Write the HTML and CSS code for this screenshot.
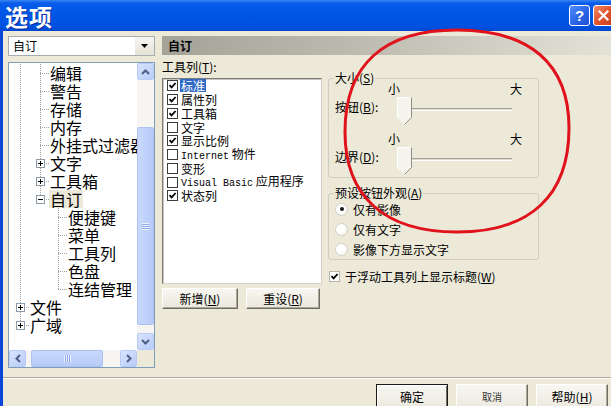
FILE: index.html
```html
<!DOCTYPE html>
<html lang="zh-CN">
<head>
<meta charset="utf-8">
<title>选项</title>
<link rel="stylesheet" href="styles.css">
</head>
<body>
<div class="window">
  <div class="titlebar">
    <span class="title">选项</span>
    <div class="tb-btns">
      <span class="tb-btn help">?</span>
      <span class="tb-btn close"><svg width="13" height="13" viewBox="0 0 13 13"><path d="M2.5 2.5l8 8M10.5 2.5l-8 8" stroke="#fff" stroke-width="2.2" stroke-linecap="square"/></svg></span>
    </div>
  </div>
  <div class="client">
    <div class="main">
      <div class="left">
        <div class="combo">
          <span class="combo-text">自订</span>
          <span class="combo-btn"><svg width="7" height="4" viewBox="0 0 7 4"><path d="M0 0h7L3.5 4z" fill="#000"/></svg></span>
        </div>
        <div class="tree">
          <div class="rows">
            <div class="trow"><span class="c v"></span><span class="c t"></span><span class="lbl">编辑</span></div>
            <div class="trow"><span class="c v"></span><span class="c t"></span><span class="lbl">警告</span></div>
            <div class="trow"><span class="c v"></span><span class="c t"></span><span class="lbl">存储</span></div>
            <div class="trow"><span class="c v"></span><span class="c t"></span><span class="lbl">内存</span></div>
            <div class="trow"><span class="c v"></span><span class="c t"></span><span class="lbl">外挂式过滤器</span></div>
            <div class="trow"><span class="c v"></span><span class="c t"><span class="exp"><svg width="9" height="9" viewBox="0 0 9 9"><rect x=".5" y=".5" width="8" height="8" fill="#fff" stroke="#8D9AA8"/><path d="M2 4.5h5M4.5 2v5" stroke="#000"/></svg></span></span><span class="lbl">文字</span></div>
            <div class="trow"><span class="c v"></span><span class="c t"><span class="exp"><svg width="9" height="9" viewBox="0 0 9 9"><rect x=".5" y=".5" width="8" height="8" fill="#fff" stroke="#8D9AA8"/><path d="M2 4.5h5M4.5 2v5" stroke="#000"/></svg></span></span><span class="lbl">工具箱</span></div>
            <div class="trow"><span class="c v"></span><span class="c l"><span class="exp"><svg width="9" height="9" viewBox="0 0 9 9"><rect x=".5" y=".5" width="8" height="8" fill="#fff" stroke="#8D9AA8"/><path d="M2 4.5h5" stroke="#000"/></svg></span></span><span class="lbl sel">自订</span></div>
            <div class="trow"><span class="c v"></span><span class="c"></span><span class="c n t3"></span><span class="lbl">便捷键</span></div>
            <div class="trow"><span class="c v"></span><span class="c"></span><span class="c n t3"></span><span class="lbl">菜单</span></div>
            <div class="trow"><span class="c v"></span><span class="c"></span><span class="c n t3"></span><span class="lbl">工具列</span></div>
            <div class="trow"><span class="c v"></span><span class="c"></span><span class="c n t3"></span><span class="lbl">色盘</span></div>
            <div class="trow"><span class="c v"></span><span class="c"></span><span class="c n l3"></span><span class="lbl">连结管理</span></div>
            <div class="trow"><span class="c t"><span class="exp"><svg width="9" height="9" viewBox="0 0 9 9"><rect x=".5" y=".5" width="8" height="8" fill="#fff" stroke="#8D9AA8"/><path d="M2 4.5h5M4.5 2v5" stroke="#000"/></svg></span></span><span class="lbl">文件</span></div>
            <div class="trow"><span class="c l"><span class="exp"><svg width="9" height="9" viewBox="0 0 9 9"><rect x=".5" y=".5" width="8" height="8" fill="#fff" stroke="#8D9AA8"/><path d="M2 4.5h5M4.5 2v5" stroke="#000"/></svg></span></span><span class="lbl">广域</span></div>
          </div>
          <div class="vscroll">
            <span class="sb-btn"><svg width="9" height="6" viewBox="0 0 9 6"><path d="M1 5L4.5 1.5L8 5" fill="none" stroke="#4D6185" stroke-width="2"/></svg></span>
            <div class="vtrack"><span class="vthumb"><span class="grip-v"></span></span></div>
            <span class="sb-btn"><svg width="9" height="6" viewBox="0 0 9 6"><path d="M1 1L4.5 4.5L8 1" fill="none" stroke="#4D6185" stroke-width="2"/></svg></span>
          </div>
          <div class="hscroll">
            <span class="sb-btn"><svg width="6" height="9" viewBox="0 0 6 9"><path d="M5 1L1.5 4.5L5 8" fill="none" stroke="#4D6185" stroke-width="2"/></svg></span>
            <div class="htrack"><span class="hthumb"><span class="grip-h"></span></span></div>
            <span class="sb-btn"><svg width="6" height="9" viewBox="0 0 6 9"><path d="M1 1L4.5 4.5L1 8" fill="none" stroke="#4D6185" stroke-width="2"/></svg></span>
          </div>
          <div class="corner"></div>
        </div>
      </div>
      <div class="right">
        <div class="header">自订</div>
        <div class="panel">
          <div class="col-a">
            <div class="lab">工具列(<u>T</u>):</div>
            <div class="listbox">
              <div class="li"><span class="cb"><svg width="9" height="9" viewBox="0 0 9 9"><path d="M1.5 4.2L3.6 6.4L7.6 2" fill="none" stroke="#000" stroke-width="1.7"/></svg></span><span class="lt hl">标准</span></div>
              <div class="li"><span class="cb"><svg width="9" height="9" viewBox="0 0 9 9"><path d="M1.5 4.2L3.6 6.4L7.6 2" fill="none" stroke="#000" stroke-width="1.7"/></svg></span><span class="lt">属性列</span></div>
              <div class="li"><span class="cb"><svg width="9" height="9" viewBox="0 0 9 9"><path d="M1.5 4.2L3.6 6.4L7.6 2" fill="none" stroke="#000" stroke-width="1.7"/></svg></span><span class="lt">工具箱</span></div>
              <div class="li"><span class="cb"></span><span class="lt">文字</span></div>
              <div class="li"><span class="cb"><svg width="9" height="9" viewBox="0 0 9 9"><path d="M1.5 4.2L3.6 6.4L7.6 2" fill="none" stroke="#000" stroke-width="1.7"/></svg></span><span class="lt">显示比例</span></div>
              <div class="li"><span class="cb"></span><span class="lt"><span class="mono">Internet</span> 物件</span></div>
              <div class="li"><span class="cb"></span><span class="lt">变形</span></div>
              <div class="li"><span class="cb"></span><span class="lt"><span class="mono">Visual Basic</span> 应用程序</span></div>
              <div class="li"><span class="cb"><svg width="9" height="9" viewBox="0 0 9 9"><path d="M1.5 4.2L3.6 6.4L7.6 2" fill="none" stroke="#000" stroke-width="1.7"/></svg></span><span class="lt">状态列</span></div>
            </div>
            <div class="btnrow">
              <span class="btn b-new">新增(<u>N</u>)</span>
              <span class="btn b-reset">重设(<u>R</u>)</span>
            </div>
          </div>
          <div class="col-b">
            <div class="group g-size">
              <div class="legend">大小(<u>S</u>)</div>
              <div class="srow first">
                <span class="slabel">按钮(<u>B</u>):</span>
                <div class="slider">
                  <div class="scale"><span>小</span><span>大</span></div>
                  <div class="strack">
                    <div class="groove"></div>
                    <svg class="sthumb" width="15" height="28" viewBox="0 0 15 28"><path d="M0.5 0.5H14.5V20.5L7.5 27.5L0.5 21.5Z" fill="#F5F4EF"/><path d="M0.5 21.5V0.5H14" fill="none" stroke="#fff"/><path d="M14.5 0.5V20.5L7.5 27.5" fill="none" stroke="#8E8D86"/></svg>
                  </div>
                </div>
              </div>
              <div class="srow">
                <span class="slabel">边界(<u>D</u>):</span>
                <div class="slider">
                  <div class="scale"><span>小</span><span>大</span></div>
                  <div class="strack">
                    <div class="groove"></div>
                    <svg class="sthumb" width="15" height="28" viewBox="0 0 15 28"><path d="M0.5 0.5H14.5V20.5L7.5 27.5L0.5 21.5Z" fill="#F5F4EF"/><path d="M0.5 21.5V0.5H14" fill="none" stroke="#fff"/><path d="M14.5 0.5V20.5L7.5 27.5" fill="none" stroke="#8E8D86"/></svg>
                  </div>
                </div>
              </div>
            </div>
            <div class="group g-look">
              <div class="legend">预设按钮外观(<u>A</u>)</div>
              <div class="rrow first"><span class="radio on"></span><span>仅有影像</span></div>
              <div class="rrow"><span class="radio"></span><span>仅有文字</span></div>
              <div class="rrow"><span class="radio"></span><span>影像下方显示文字</span></div>
            </div>
            <div class="crow"><span class="cb plain"><svg width="9" height="9" viewBox="0 0 9 9"><path d="M1.5 4.2L3.6 6.4L7.6 2" fill="none" stroke="#000" stroke-width="1.8"/></svg></span><span>于浮动工具列上显示标题(<u>W</u>)</span></div>
          </div>
        </div>
      </div>
    </div>
    <div class="sep"></div>
    <div class="footer">
      <span class="fbtn def">确定</span>
      <span class="fbtn cancel">取消</span>
      <span class="fbtn">帮助(<u>H</u>)</span>
    </div>
  </div>
  <svg class="mark" width="611" height="406" viewBox="0 0 611 406"><path d="M457 30C530 30 569 64 569 128C569 196 530 232 457 232C384 232 345 196 345 132C345 64 384 30 457 30Z" fill="none" stroke="#E0121C" stroke-width="3"/></svg>
</div>
</body>
</html>
```

FILE: styles.css
```css
* { box-sizing: border-box; }
body {
  margin: 0;
  width: 611px;
  height: 406px;
  overflow: hidden;
  background: #ECE9D8;
  font-family: "Noto Sans CJK SC", "Liberation Sans", sans-serif;
  font-size: 12px;
  color: #000;
}
u { text-decoration: underline; text-underline-offset: 1px; }

.window {
  position: relative;
  width: 611px;
  height: 406px;
  display: flex;
  flex-direction: column;
}

/* title bar */
.titlebar {
  flex: none;
  height: 31px;
  display: flex;
  align-items: center;
  padding-left: 5px;
  overflow: hidden;
  background: linear-gradient(to bottom, #3A86F4 0, #0A5CEB 3px, #0056E6 40%, #0052E0 85%, #0047D2 100%);
}
.title {
  color: #fff;
  font-size: 23px;
  font-weight: bold;
  line-height: 28px;
  letter-spacing: 1px;
  text-shadow: 1px 1px 0 #0B2E9E;
}
.tb-btns {
  margin-left: auto;
  margin-right: -3px;
  display: flex;
  gap: 3px;
  align-self: flex-start;
  margin-top: 5px;
}
.tb-btn {
  width: 21px;
  height: 21px;
  border: 1px solid #fff;
  border-radius: 3px;
  display: flex;
  align-items: center;
  justify-content: center;
}
.help {
  background: linear-gradient(135deg, #4F8BF8 0%, #2A62E6 60%, #1E4FD0 100%);
  color: #fff;
  font-family: "Liberation Sans", sans-serif;
  font-weight: bold;
  font-size: 15px;
  line-height: 1;
}
.close {
  background: linear-gradient(135deg, #F08A6A 0%, #E2532E 50%, #C8401F 100%);
}

/* client */
.client {
  flex: 1;
  min-height: 0;
  border-left: 3px solid #0A46DA;
  display: flex;
  flex-direction: column;
}
.main {
  display: flex;
  gap: 7px;
  padding: 5px 0 0 5px;
}
.left {
  flex: none;
  width: 147px;
  height: 332px;
  display: flex;
  flex-direction: column;
  gap: 6px;
}
.combo {
  flex: none;
  height: 20px;
  border: 1px solid #A5ACB2;
  background: #fff;
  display: flex;
  align-items: stretch;
}
.combo-text {
  flex: 1;
  padding-left: 4px;
  line-height: 18px;
}
.combo-btn {
  width: 19px;
  background: linear-gradient(to bottom, #F6F5F0, #E4E2D6);
  display: flex;
  align-items: center;
  justify-content: center;
}

/* tree */
.tree {
  flex: 1;
  border: 1px solid #7F9DB9;
  background: #fff;
  display: grid;
  grid-template-columns: 1fr 17px;
  grid-template-rows: 1fr 17px;
  overflow: hidden;
}
.rows {
  padding-top: 1px;
  overflow: hidden;
}
.trow {
  display: flex;
  height: 18px;
  white-space: nowrap;
  font-size: 16px;
  line-height: 18px;
}
.c {
  flex: none;
  width: 20px;
  display: flex;
  align-items: center;
}
.c.n { width: 18px; }
.v {
  background: repeating-linear-gradient(to bottom, #A0A0A0 0 1px, transparent 1px 2px) 11px 0 / 1px 100% no-repeat;
}
.t {
  background:
    repeating-linear-gradient(to bottom, #A0A0A0 0 1px, transparent 1px 2px) 11px 0 / 1px 100% no-repeat,
    repeating-linear-gradient(to right, #A0A0A0 0 1px, transparent 1px 2px) 11px 9px / 9px 1px no-repeat;
}
.l {
  background:
    repeating-linear-gradient(to bottom, #A0A0A0 0 1px, transparent 1px 2px) 11px 0 / 1px 10px no-repeat,
    repeating-linear-gradient(to right, #A0A0A0 0 1px, transparent 1px 2px) 11px 9px / 9px 1px no-repeat;
}
.t3 {
  background:
    repeating-linear-gradient(to bottom, #A0A0A0 0 1px, transparent 1px 2px) 9px 0 / 1px 100% no-repeat,
    repeating-linear-gradient(to right, #A0A0A0 0 1px, transparent 1px 2px) 9px 9px / 9px 1px no-repeat;
}
.l3 {
  background:
    repeating-linear-gradient(to bottom, #A0A0A0 0 1px, transparent 1px 2px) 9px 0 / 1px 10px no-repeat,
    repeating-linear-gradient(to right, #A0A0A0 0 1px, transparent 1px 2px) 9px 9px / 9px 1px no-repeat;
}
.exp {
  display: block;
  width: 9px;
  height: 9px;
  margin-left: 7px;
  line-height: 0;
}
.lbl { padding: 0 1px; }
.lbl.sel { background: #ECE9D8; }

/* scrollbars */
.vscroll {
  display: flex;
  flex-direction: column;
  background: #F6F5F1;
}
.hscroll {
  display: flex;
  background: #F6F5F1;
}
.sb-btn {
  flex: none;
  width: 17px;
  height: 17px;
  border: 1px solid #B7CBF5;
  border-radius: 2px;
  background: linear-gradient(135deg, #D8E4FD, #B9CCF8);
  display: flex;
  align-items: center;
  justify-content: center;
}
.vtrack { flex: 1; display: flow-root; }
.vthumb {
  display: flex;
  align-items: center;
  justify-content: center;
  margin-top: 47px;
  height: 198px;
  border: 1px solid #ABC2F2;
  border-radius: 2px;
  background: linear-gradient(to right, #C9D9FC, #B8CBF7);
}
.grip-v {
  width: 7px;
  height: 7px;
  background: repeating-linear-gradient(to bottom, #EEF3FE 0 1px, #8CA8E8 1px 2px);
}
.htrack { flex: 1; }
.hthumb {
  display: flex;
  align-items: center;
  justify-content: center;
  margin-left: 5px;
  width: 72px;
  height: 17px;
  border: 1px solid #ABC2F2;
  border-radius: 2px;
  background: linear-gradient(to bottom, #C9D9FC, #B8CBF7);
}
.grip-h {
  width: 7px;
  height: 7px;
  background: repeating-linear-gradient(to right, #EEF3FE 0 1px, #8CA8E8 1px 2px);
}
.corner { background: #ECE9D8; }

/* right */
.right {
  flex: 1;
  display: flex;
  flex-direction: column;
}
.header {
  height: 19px;
  padding-left: 6px;
  line-height: 19px;
  font-weight: bold;
  background: linear-gradient(to right, #A4A398 0%, #BEBCB0 45%, #E4E2D6 100%);
}
.panel {
  display: flex;
  gap: 6px;
  padding-top: 6px;
}
.col-a {
  flex: none;
  width: 160px;
  display: flex;
  flex-direction: column;
}
.lab { line-height: 12px; height: 12px; }
.listbox {
  margin-top: 5px;
  height: 206px;
  background: #fff;
  border: 1px solid #7A7A7A;
  border-right-color: #D4D0C8;
  border-bottom-color: #D4D0C8;
  box-shadow: inset 1px 1px 0 #C8C6BC;
}
.li {
  height: 13.75px;
  display: flex;
  align-items: center;
  white-space: nowrap;
  padding-left: 4px;
}
.cb {
  flex: none;
  width: 11px;
  height: 11px;
  border: 1px solid #3C3C3C;
  background: #fff;
  display: flex;
  align-items: center;
  justify-content: center;
}
.cb.plain { border-color: #B8B6AA; }
.lt {
  margin-left: 2px;
  padding: 0 1px;
  line-height: 13px;
}
.lt.hl { background: #316AC5; color: #fff; }
.mono {
  font-family: "Liberation Mono", monospace;
  font-size: 10px;
}
.btnrow {
  display: flex;
  gap: 8px;
  margin-top: 4px;
}
.btn {
  height: 21px;
  display: flex;
  align-items: center;
  justify-content: center;
  background: linear-gradient(to bottom, #F7F6F1, #EAE8DD);
  border: 1px solid;
  border-color: #FFFFFF #6F6D62 #6F6D62 #FFFFFF;
  box-shadow: inset -1px -1px 0 #ACA899;
}
.b-new { width: 76px; }
.b-reset { width: 74px; }

.col-b {
  flex: none;
  width: 211px;
  display: flex;
  flex-direction: column;
}
.group {
  border: 1px solid #D0CDBE;
  border-radius: 3px;
  padding: 0 6px;
}
.g-size { margin-top: 17px; padding-bottom: 2px; }
.g-look { margin-top: 15px; }
.legend {
  width: fit-content;
  height: 14px;
  line-height: 14px;
  margin: -8px 0 0 -1px;
  padding: 0 1px;
  background: #ECE9D8;
}
.srow {
  display: flex;
  margin-top: 8px;
}
.srow.first { margin-top: -2px; }
.slabel {
  width: 53px;
  flex: none;
  align-self: flex-end;
  line-height: 12px;
  margin-bottom: 12px;
  white-space: nowrap;
}
.slider { width: 134px; }
.scale {
  display: flex;
  justify-content: space-between;
  height: 12px;
  line-height: 12px;
}
.strack {
  position: relative;
  display: flow-root;
  height: 28px;
  margin-top: 2px;
  padding: 11px 0 0 9px;
}
.groove {
  width: 115px;
  height: 3px;
  border-top: 1px solid #A3A29A;
  border-bottom: 1px solid #FFFFFF;
  background: #DCDACE;
}
.sthumb {
  position: absolute;
  left: 9px;
  top: 0;
}
.rrow {
  height: 20px;
  display: flex;
  align-items: center;
  gap: 5px;
}
.rrow.first { margin-top: -1px; }
.radio {
  flex: none;
  width: 13px;
  height: 13px;
  border-radius: 50%;
  border: 1px solid #D3D1C6;
  background: radial-gradient(circle at 40% 40%, #FFFFFF 40%, #ECEAE0 100%);
  display: flex;
  align-items: center;
  justify-content: center;
}
.radio.on::after {
  content: "";
  width: 4px;
  height: 4px;
  border-radius: 50%;
  background: #1A1A1A;
}
.crow {
  margin-top: 8px;
  margin-left: 1px;
  height: 16px;
  display: flex;
  align-items: center;
  gap: 5px;
}

/* footer */
.sep {
  margin-top: 9px;
  height: 2px;
  border-top: 1px solid #ACA899;
  border-bottom: 1px solid #FFFFFF;
}
.footer {
  display: flex;
  justify-content: flex-end;
  gap: 8px;
  padding: 5px 3px 0 0;
}
.fbtn {
  width: 72px;
  height: 24px;
  display: flex;
  align-items: center;
  justify-content: center;
  background: linear-gradient(to bottom, #F7F6F1, #ECEAE0);
  border: 1px solid;
  border-color: #FFFFFF #6F6D62 #6F6D62 #FFFFFF;
  box-shadow: inset -1px -1px 0 #ACA899;
}
.fbtn.def {
  border: 1px solid #1A1A1A;
  box-shadow: inset 1px 1px 0 #FFFFFF, inset -1px -1px 0 #6F6D62;
}
.fbtn.cancel {
  font-size: 10px;
  color: #333;
}

.mark {
  position: absolute;
  left: 0;
  top: 0;
  pointer-events: none;
}
```
